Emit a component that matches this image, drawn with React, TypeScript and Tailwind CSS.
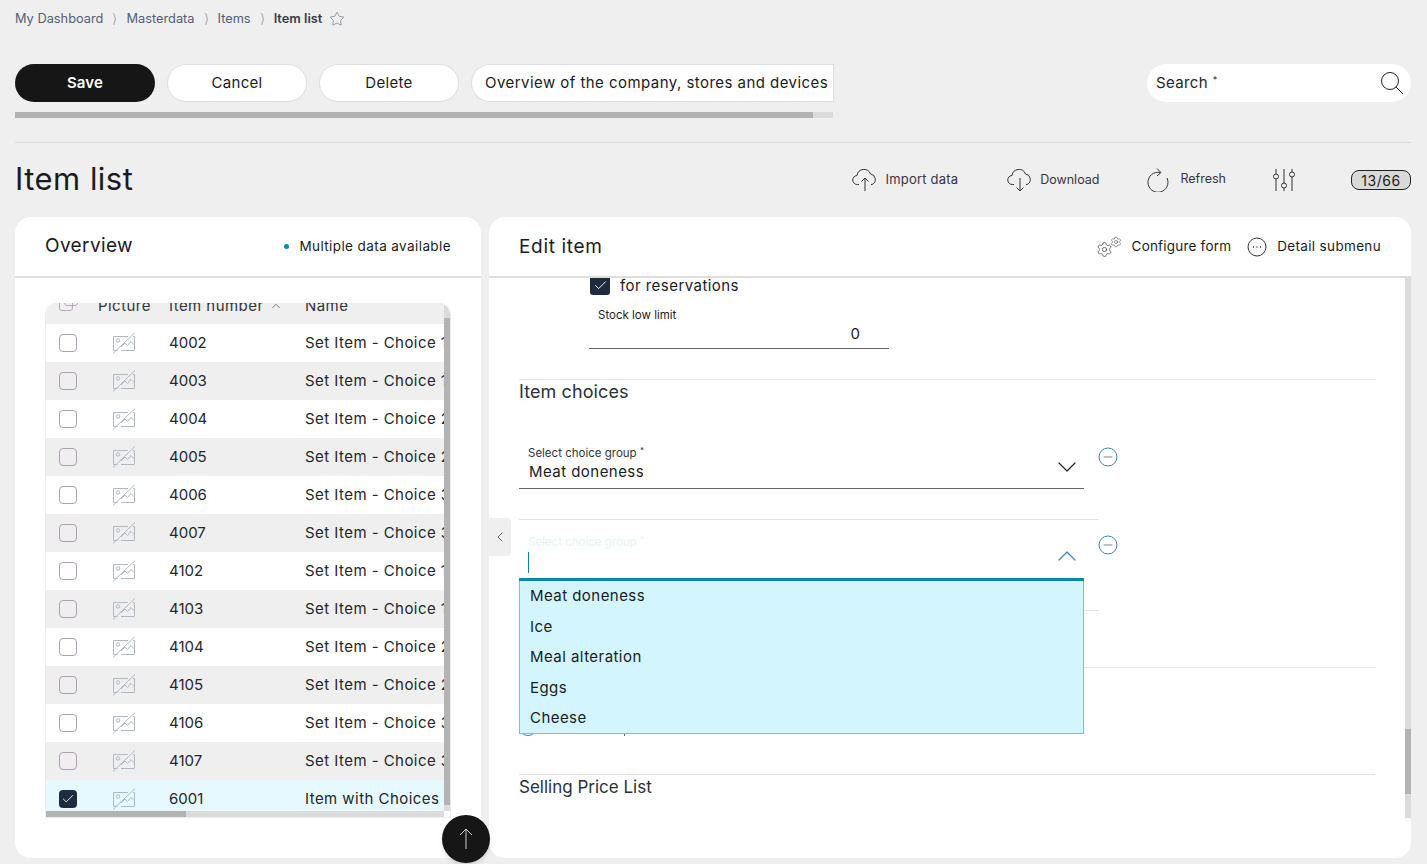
import React from 'react';
import { Star, Settings, ChevronDown, ChevronUp, ChevronLeft, Check } from 'lucide-react';

const rows = [
  { no: '4002', name: 'Set Item - Choice 1' },
  { no: '4003', name: 'Set Item - Choice 1' },
  { no: '4004', name: 'Set Item - Choice 2' },
  { no: '4005', name: 'Set Item - Choice 2' },
  { no: '4006', name: 'Set Item - Choice 3' },
  { no: '4007', name: 'Set Item - Choice 3' },
  { no: '4102', name: 'Set Item - Choice 1' },
  { no: '4103', name: 'Set Item - Choice 1' },
  { no: '4104', name: 'Set Item - Choice 2' },
  { no: '4105', name: 'Set Item - Choice 2' },
  { no: '4106', name: 'Set Item - Choice 3' },
  { no: '4107', name: 'Set Item - Choice 3' },
  { no: '6001', name: 'Item with Choices', selected: true },
];

const options = ['Meat doneness', 'Ice', 'Meal alteration', 'Eggs', 'Cheese'];

function NoImage() {
  return (
    <svg width="24" height="22" viewBox="0 0 24 22" fill="none" stroke="#aeb8c6" strokeWidth="1">
      <path d="M16 4.500H1.500v14h4M21 4.500h1.500v14H9" />
      <circle cx="6" cy="8.500" r="1.700" />
      <path d="M9 15l4-4 2.500 2.500L19 9.500l3 3" />
      <path d="M1 21.500L23 .5" />
    </svg>
  );
}

function CloudArrow({ down }: { down?: boolean }) {
  return (
    <svg width="26" height="24" viewBox="0 0 26 24" fill="none" stroke="#333" strokeWidth="1">
      <path d="M7 16.500H5.500a4.500 4.500 0 0 1-.5-9 7 7 0 0 1 13.500-1.500 5.500 5.500 0 0 1 1.500 10.500H19" />
      {down ? <path d="M13 10v13M9.500 19.500L13 23l3.500-3.500" /> : <path d="M13 23V10M9.500 13.500L13 10l3.500 3.500" />}
    </svg>
  );
}

function MinusCircle() {
  return (
    <svg width="20" height="20" viewBox="0 0 20 20" fill="none">
      <circle cx="10" cy="10" r="9" stroke="#3f87ab" />
      <path d="M5.500 10h9" stroke="#a8adb5" strokeWidth="1.500" />
    </svg>
  );
}

function ActionButton({ label }: { label: string }) {
  return (
    <button className="w-[140px] h-[38px] shrink-0 rounded-full bg-white border border-[#dedede] text-[15px] tracking-[0.02em] text-[#1b1b1f]">
      {label}
    </button>
  );
}

function ToolLink({ icon, label, className }: { icon: React.ReactNode; label: string; className?: string }) {
  return (
    <div className={`flex items-center text-[#3a3345] ${className ?? ''}`}>
      {icon}
      <span>{label}</span>
    </div>
  );
}

export default function App() {
  return (
    <div className="relative h-[864px] overflow-hidden bg-[#efefef] font-[Inter,sans-serif] text-[#1b1b1f]">
      <div className="pl-[15px] pr-[16px] pt-[8px]">
        {/* breadcrumbs */}
        <div className="flex items-center h-[20px] pt-[1px] text-[12.800px] text-[#52607a]">
          <span>My Dashboard</span>
          <span className="mx-[9px] text-[#a5abb5]">⟩</span>
          <span>Masterdata</span>
          <span className="mx-[9px] text-[#a5abb5]">⟩</span>
          <span>Items</span>
          <span className="mx-[9px] text-[#a5abb5]">⟩</span>
          <span className="font-semibold text-[#333b4a]">Item list</span>
          <Star size={16} strokeWidth={0.9} className="ml-[7px] text-[#52607a]" />
        </div>

        {/* action strip and search */}
        <div className="flex justify-between items-start mt-[36px]">
          <div className="w-[818px]">
            <div className="flex gap-[12px]">
              <button className="w-[140px] h-[38px] shrink-0 rounded-full bg-[#161616] text-white text-[15px] font-semibold tracking-[0.01em]">
                Save
              </button>
              <ActionButton label="Cancel" />
              <ActionButton label="Delete" />
              <button className="h-[38px] w-[363px] shrink-0 rounded-r-[10px] rounded-l-full bg-white border border-[#dedede] text-[15px] text-left pl-[13px] whitespace-nowrap tracking-[0.03em]">
                Overview of the company, stores and devices
              </button>
            </div>
            <div className="mt-[10px] h-[6px] bg-[#dbdbdb]">
              <div className="h-full w-[798px] bg-[#b3b3b3]" />
            </div>
          </div>
          <div className="flex items-center justify-between w-[264px] h-[38px] rounded-full bg-white pl-[9px] pr-[7px]">
            <span className="text-[15px] tracking-[0.025em] text-[#26262c]">
              Search <sup className="text-[9px]">*</sup>
            </span>
            <svg width="24" height="24" viewBox="0 0 24 24" fill="none" stroke="#222" strokeWidth="1">
              <circle cx="10" cy="10" r="8.500" />
              <path d="M16 16l7 7" />
            </svg>
          </div>
        </div>

        <div className="mt-[24px] border-t border-[#dcdcdc]" />

        {/* page title and tools */}
        <div className="flex items-center h-[74px]">
          <h1 className="-mt-[2px] text-[31px] tracking-[0.015em] text-[#1b1b1f]">Item list</h1>
          <div className="ml-auto flex items-center">
            <ToolLink icon={<CloudArrow />} label="Import data" className="gap-[8px] text-[13px] tracking-[0.015em]" />
            <ToolLink icon={<CloudArrow down />} label="Download" className="ml-[49px] gap-[7px] text-[12.500px]" />
            <ToolLink
              className="ml-[48px] gap-[11px] pb-[1px] text-[12.500px]"
              label="Refresh"
              icon={
                <svg width="22" height="24" viewBox="0 0 22 24" fill="none" stroke="#333" strokeWidth="1">
                  <path d="M13 4.500A10 10 0 1 0 20 10" />
                  <path d="M10 .5L14 4.500 10 8" />
                </svg>
              }
            />
            <svg className="ml-[46px]" width="24" height="24" viewBox="0 0 24 24" fill="none" stroke="#333" strokeWidth="1">
              <path d="M4 1v5M4 11v12M12 1v14M12 20v3M20 1v3M20 9v14" />
              <circle cx="4" cy="8.500" r="2.500" />
              <circle cx="12" cy="17.500" r="2.500" />
              <circle cx="20" cy="6.500" r="2.500" />
            </svg>
            <div className="ml-[55px] w-[60px] h-[20px] flex items-center justify-center rounded-[8px] border border-[#222] bg-[#d9d9d9] text-[14px] tracking-[0.04em]">
              13/66
            </div>
          </div>
        </div>

        {/* panels */}
        <div className="flex gap-[8px]">
          {/* overview */}
          <section className="w-[466px] h-[641px] rounded-[16px] bg-white">
            <div className="flex items-center justify-between h-[61px] pl-[30px] pr-[30px] border-b-2 border-[#dedede]">
              <h2 className="text-[19px] tracking-[0.02em]">Overview</h2>
              <div className="flex items-center text-[13.500px] tracking-[0.03em]">
                <span className="w-[5px] h-[5px] mr-[10px] rounded-full bg-[#0a8aa8]" />
                Multiple data available
              </div>
            </div>
            <div className="ml-[30px] mt-[25px] w-[406px] h-[515px] overflow-hidden rounded-t-[12px] border-x border-b border-[#ececec]">
              <div className="flex h-[508px]">
                <div className="w-[398px] overflow-hidden">
                  <div className="grid grid-cols-[52px_71px_136px_1fr] h-[21px] overflow-hidden bg-[#efefef] text-[15px] leading-[20px] tracking-[0.03em] text-[#33343c]">
                    <div className="pl-[13px] -mt-[6px]">
                      <div className="relative w-[18px] h-[18px]">
                        <div className="absolute left-0 top-0 w-[14px] h-[14px] rounded-[3px] border border-[#b5a9bb]" />
                        <div className="absolute left-[5px] top-[-5px] w-[14px] h-[14px] rounded-[3px] border border-[#b5a9bb]" />
                      </div>
                    </div>
                    <div className="-mt-[7px]">Picture</div>
                    <div className="-mt-[7px] flex items-center h-[20px] gap-[5px]">
                      Item number <ChevronUp size={14} strokeWidth={1} />
                    </div>
                    <div className="-mt-[7px]">Name</div>
                  </div>
                  {rows.map((row, i) => (
                    <div
                      key={row.no}
                      className={`grid grid-cols-[52px_71px_136px_1fr] items-center h-[38px] text-[15px] text-[#26262c] whitespace-nowrap ${
                        row.selected ? 'bg-[#e5f9fe]' : i % 2 === 1 ? 'bg-[#efefef]' : 'bg-white'
                      }`}
                    >
                      <div className="pl-[13px]">
                        {row.selected ? (
                          <div className="flex items-center justify-center w-[18px] h-[18px] rounded-[4px] bg-[#1f2b40]">
                            <Check size={14} strokeWidth={1.500} className="text-white" />
                          </div>
                        ) : (
                          <div className="w-[18px] h-[18px] rounded-[4px] border border-[#b09fb4] bg-transparent" />
                        )}
                      </div>
                      <div className="pl-[14px] flex">
                        <NoImage />
                      </div>
                      <div>{row.no}</div>
                      <div className="overflow-hidden tracking-[0.03em]">{row.name}</div>
                    </div>
                  ))}
                </div>
                <div className="w-[6px] bg-[#dbdbdb] pt-[15px]">
                  <div className="h-[487px] bg-[#b3b3b3]" />
                </div>
              </div>
              <div className="w-[398px] h-[6px] bg-[#dbdbdb]">
                <div className="w-[140px] h-full bg-[#b3b3b3]" />
              </div>
            </div>
          </section>

          {/* edit form */}
          <section className="relative w-[922px] h-[641px] rounded-[16px] bg-white">
            <div className="flex items-center h-[61px] pl-[30px] pr-[30px] border-b-2 border-[#dedede]">
              <h2 className="mt-[1px] text-[19px] tracking-[0.035em]">Edit item</h2>
              <div className="ml-auto flex items-center text-[13.500px]">
                <div className="flex items-end mr-[10px]">
                  <Settings size={17} strokeWidth={1} className="text-[#333] mt-[6px]" />
                  <Settings size={12} strokeWidth={1} className="text-[#333] -ml-[3px] mb-[10px]" />
                </div>
                <span className="tracking-[0.015em]">Configure form</span>
                <svg className="ml-[16px] mr-[10px]" width="20" height="20" viewBox="0 0 20 20" fill="none" stroke="#333" strokeWidth="1">
                  <circle cx="10" cy="10" r="9" />
                  <path d="M6 10h1M9.500 10h1M13 10h1" strokeWidth="1.500" />
                </svg>
                <span className="tracking-[0.025em]">Detail submenu</span>
              </div>
            </div>

            <div className="flex h-[540px]">
              <div className="flex-1 overflow-hidden pl-[30px] pr-[30px]">
                <div className="flex items-center h-[16px] ml-[71px] text-[15px] tracking-[0.03em]">
                  <div className="flex items-center justify-center w-[20px] h-[18px] -mt-[1px] rounded-b-[3px] bg-[#1f2b40] mr-[10px]">
                    <Check size={15} strokeWidth={1.500} className="text-white" />
                  </div>
                  for reservations
                </div>

                <div className="ml-[70px] mt-[14px] w-[300px] h-[41px] border-b border-[#666]">
                  <div className="pl-[9px] text-[11.500px] leading-[14px]">Stock low limit</div>
                  <div className="pr-[29px] mt-[2px] text-right text-[15px] leading-[20px]">0</div>
                </div>

                <div className="mt-[30px] w-[856px] border-t border-[#e4e4e4]" />
                <h3 className="h-[24px] text-[18px] leading-[24px] tracking-[0.005em] text-[#2a2f3a]">Item choices</h3>

                <div className="flex mt-[41px] h-[44px]">
                  <div className="flex-none w-[565px] border-b border-[#666] flex items-start justify-between">
                    <div className="pl-[9px] pt-[1px]">
                      <div className="text-[11.500px] leading-[14px] text-[#33343c]">
                        Select choice group <sup className="text-[8px]">*</sup>
                      </div>
                      <div className="pl-[1px] mt-[1px] text-[15px] leading-[22px] tracking-[0.03em]">Meat doneness</div>
                    </div>
                    <ChevronDown size={32} strokeWidth={0.9} className="mt-[6px] mr-[1px] text-[#26262c]" />
                  </div>
                  <div className="ml-[14px] mt-[2px]">
                    <MinusCircle />
                  </div>
                </div>

                <div className="mt-[30px] w-[580px] border-t border-[#e4e4e4]" />

                <div className="flex mt-[16px] h-[45px]">
                  <div className="relative flex-none w-[565px] h-[45px] border-b-[3px] border-[#0a8aa8] flex items-start justify-between">
                    <div className="pl-[9px] -mt-[1px]">
                      <div className="text-[11.500px] leading-[14px] text-[#e6f2f6]">
                        Select choice group <sup className="text-[8px]">*</sup>
                      </div>
                      <div className="mt-[3px] w-px h-[21px] bg-[#0a8aa8]" />
                    </div>
                    <ChevronUp size={32} strokeWidth={0.9} className="mt-[4px] mr-[1px] text-[#3f87ab]" />

                    <ul className="absolute left-0 top-[45px] z-10 w-[565px] h-[153px] border border-t-0 border-[#6cc6e0] bg-[#d3f5fe] text-[15px] tracking-[0.03em]">
                      {options.map((option) => (
                        <li key={option} className="h-[30.500px] pl-[10px] leading-[29.500px]">
                          {option}
                        </li>
                      ))}
                    </ul>
                  </div>
                  <div className="ml-[14px] -mt-[1px]">
                    <MinusCircle />
                  </div>
                </div>

                <div className="mt-[29px] w-[580px] border-t border-[#e4e4e4]" />
                <div className="mt-[56px] w-[856px] border-t border-[#e4e4e4]" />
                <div className="flex items-end mt-[50px]">
                  <div className="w-[18px] h-[18px] rounded-full border border-[#3f87ab]" />
                  <div className="ml-[87px] w-px h-[6px] bg-[#666]" />
                </div>
                <div className="mt-[38px] w-[856px] border-t border-[#e4e4e4]" />
                <h3 className="text-[17px] leading-[24px] text-[#2a2f3a]">Selling Price List</h3>
              </div>
              <div className="w-[6px] bg-[#dbdbdb] pt-[451px]">
                <div className="h-[65px] bg-[#b3b3b3]" />
              </div>
            </div>

            {/* collapse tab */}
            <button className="absolute left-0 top-[301px] flex items-center justify-center w-[22px] h-[38px] rounded-r-[4px] bg-[#efefef]">
              <ChevronLeft size={16} strokeWidth={1} className="text-[#222]" />
            </button>
          </section>
        </div>
      </div>

      {/* back to top */}
      <button className="absolute left-[442px] top-[815px] z-20 flex items-center justify-center w-[48px] h-[48px] rounded-full bg-[#161616] shadow-md">
        <svg width="14" height="22" viewBox="0 0 14 22" fill="none" stroke="#cfcfcf" strokeWidth="1">
          <path d="M7 21V1M1 7l6-6 6 6" />
        </svg>
      </button>
    </div>
  );
}
